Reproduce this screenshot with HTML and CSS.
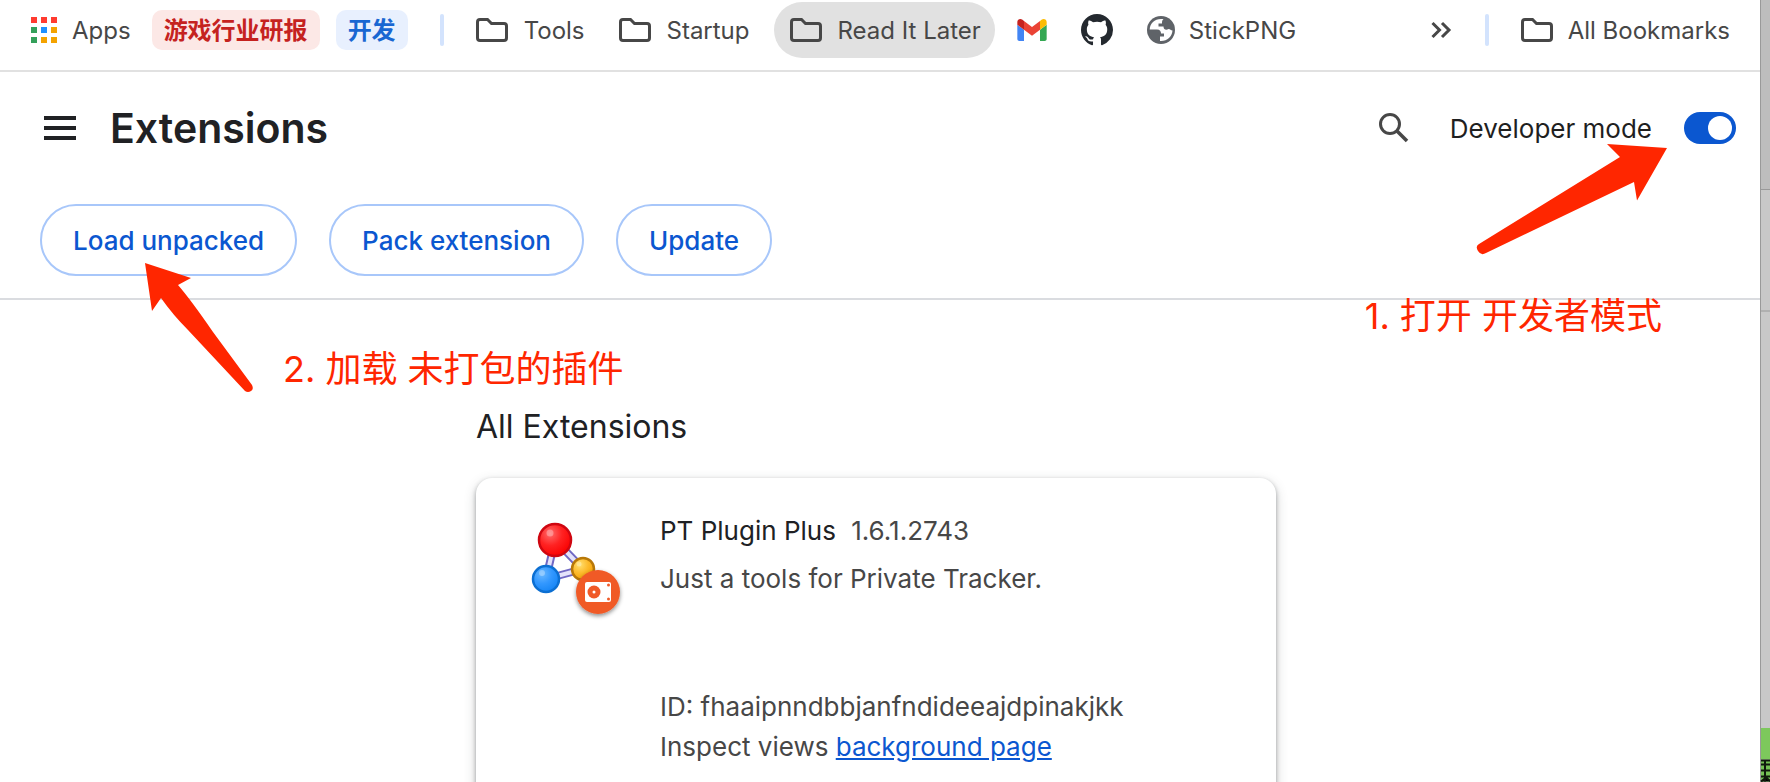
FILE: index.html
```html
<!DOCTYPE html>
<html lang="en">
<head>
<meta charset="utf-8">
<title>Extensions</title>
<link rel="stylesheet" href="styles.css">
</head>
<body>
<svg class="defs" aria-hidden="true">
  <symbol id="folder" viewBox="0 0 32 24"><path d="M4 1.5H11.5L15.5 5.500H28Q30.500 5.500 30.500 8V20Q30.500 22.500 28 22.500H4Q1.500 22.500 1.500 20V4Q1.500 1.500 4 1.500Z" fill="none" stroke="#474747" stroke-width="3"/></symbol>
</svg>
<div class="screen">
  <div class="window">
    <nav class="bookmarks" aria-label="Bookmarks">
      <a class="mark apps" href="#">
        <svg width="26" height="26" viewBox="0 0 26 26"><path fill="#ff3b30" d="M0 0h6v6H0zM10 0h6v6h-6zM20 0h6v6h-6z"/><path fill="#34a05a" d="M0 10h6v6H0zM0 20h6v6H0z"/><path fill="#1e90ff" d="M10 10h6v6h-6z"/><path fill="#f4a300" d="M20 10h6v6h-6zM10 20h6v6h-6zM20 20h6v6h-6z"/></svg>
        Apps</a>
      <button class="chip chip-red">游戏行业研报</button>
      <button class="chip chip-blue">开发</button>
      <span class="divider"></span>
      <button class="mark"><svg width="32" height="24"><use href="#folder"/></svg>Tools</button>
      <button class="mark"><svg width="32" height="24"><use href="#folder"/></svg>Startup</button>
      <button class="mark active"><svg width="32" height="24"><use href="#folder"/></svg>Read It Later</button>
      <a class="mark site" href="#" aria-label="Gmail"><svg width="30" height="22" viewBox="52 42 88 66"><path fill="#4285f4" d="M58 108h14V74L52 59v43c0 3.320 2.690 6 6 6"/><path fill="#34a853" d="M120 108h14c3.320 0 6-2.690 6-6V59l-20 15"/><path fill="#fbbc04" d="M120 48v26l20-15v-8c0-7.420-8.470-11.650-14.400-7.200"/><path fill="#ea4335" d="M72 74V48l24 18 24-18v26L96 92"/><path fill="#c5221f" d="M52 51v8l20 15V48l-5.600-4.200c-5.940-4.450-14.400-.22-14.400 7.200"/></svg></a>
      <a class="mark site" href="#" aria-label="GitHub"><svg width="32" height="32" viewBox="0 0 16 16"><path fill="#24292f" d="M8 0C3.580 0 0 3.580 0 8c0 3.540 2.290 6.530 5.470 7.590.4.070.55-.17.55-.38 0-.19-.01-.82-.01-1.490-2.010.37-2.530-.49-2.690-.94-.09-.23-.48-.94-.82-1.130-.28-.15-.68-.52-.01-.53.63-.01 1.080.58 1.230.82.72 1.210 1.870.87 2.330.66.070-.52.28-.87.51-1.070-1.780-.2-3.640-.89-3.640-3.950 0-.87.31-1.590.82-2.150-.08-.2-.36-1.020.08-2.120 0 0 .67-.21 2.200.82.64-.18 1.320-.27 2-.27s1.360.090 2 .27c1.530-1.040 2.200-.82 2.200-.82.44 1.100.16 1.920.08 2.120.51.56.82 1.270.82 2.150 0 3.070-1.870 3.750-3.650 3.950.29.25.54.73.54 1.480 0 1.070-.01 1.930-.01 2.200 0 .21.15.46.55.38A8.010 8.010 0 0 0 16 8c0-4.420-3.580-8-8-8z"/></svg></a>
      <a class="mark stick" href="#"><svg width="28" height="28" viewBox="0 0 28 28"><circle cx="14" cy="14" r="14" fill="#5f6368"/><path fill="#fff" d="M15 3C8 2.500 3 7 2.700 13.500H10c3 0 4 2 4 4h3v3h-4v4.500c7 .5 12-4 12.500-10.500-2 0-2-1.500-4-1.500-2 1.500-5 1-5-2.500h-5V7.500h3.500c0-2 0-3 1.500-4.500z"/></svg>StickPNG</a>
      <button class="more" aria-label="More bookmarks"><svg width="20" height="16" viewBox="0 0 20 16"><path d="M1.500 1l7 7-7 7M11 1l7 7-7 7" fill="none" stroke="#474747" stroke-width="3"/></svg></button>
      <span class="divider"></span>
      <button class="mark all"><svg width="32" height="24"><use href="#folder"/></svg>All Bookmarks</button>
    </nav>

    <header class="toolbar">
      <div class="titlebar">
        <button class="icon-button" aria-label="Menu"><svg width="32" height="24" viewBox="0 0 32 24"><path fill="#202124" d="M0 0h32v4H0zM0 10h32v4H0zM0 20h32v4H0z"/></svg></button>
        <h1>Extensions</h1>
        <button class="icon-button search" aria-label="Search"><svg width="30" height="30" viewBox="0 0 30 30"><circle cx="11" cy="11" r="9.500" fill="none" stroke="#474747" stroke-width="3"/><path d="M17.500 17.500L28 28" stroke="#474747" stroke-width="3.500"/></svg></button>
        <label class="dev" for="dev-mode">Developer mode</label>
        <input class="toggle" type="checkbox" role="switch" id="dev-mode" checked>
      </div>
      <div class="actions">
        <button>Load unpacked</button>
        <button>Pack extension</button>
        <button>Update</button>
      </div>
    </header>

    <main>
      <h2>All Extensions</h2>
      <article class="card">
        <div class="logo">
          <svg width="92" height="96" viewBox="0 0 92 96">
            <defs>
              <radialGradient id="r" cx=".35" cy=".3" r=".75"><stop offset="0" stop-color="#ff6a6a"/><stop offset=".5" stop-color="#ff2222"/><stop offset="1" stop-color="#fa0000"/></radialGradient>
              <radialGradient id="b" cx=".35" cy=".3" r=".75"><stop offset="0" stop-color="#6ab8ff"/><stop offset=".5" stop-color="#3398ff"/><stop offset="1" stop-color="#1484f5"/></radialGradient>
              <radialGradient id="y" cx=".35" cy=".3" r=".75"><stop offset="0" stop-color="#ffe070"/><stop offset=".5" stop-color="#fdbb2d"/><stop offset="1" stop-color="#f5a000"/></radialGradient>
              <filter id="s" x="-30%" y="-30%" width="160%" height="170%"><feDropShadow dx="0" dy="2" stdDeviation="2" flood-opacity=".45"/></filter>
            </defs>
            <g fill="none" stroke="#7068c4" stroke-width="8"><path d="M25 20L16 59M25 20L53 49M16 59L53 49"/></g>
            <g fill="none" stroke="#e4e2fa" stroke-width="4"><path d="M25 20L16 59M25 20L53 49M16 59L53 49"/></g>
            <circle cx="25" cy="20" r="16" fill="url(#r)" stroke="#cf0610" stroke-width="2.500"/>
            <circle cx="16" cy="59" r="13" fill="url(#b)" stroke="#0c6fd2" stroke-width="2.500"/>
            <circle cx="53" cy="49" r="11" fill="url(#y)" stroke="#b87808" stroke-width="2.500"/>
            <g fill="#fff" opacity=".3"><circle cx="20" cy="13" r="3.500"/><circle cx="12" cy="53" r="3"/><circle cx="49" cy="44" r="2.500"/></g>
            <circle cx="68" cy="72" r="22" fill="#f05a28" filter="url(#s)"/>
            <rect x="55" y="62" width="26" height="20" rx="2" fill="#fff"/>
            <circle cx="64" cy="72" r="6.500" fill="#f05a28"/><circle cx="64" cy="72" r="1.500" fill="#fff"/>
            <g fill="#f05a28"><circle cx="78.500" cy="65" r="1.500"/><circle cx="78.500" cy="79" r="1.500"/></g>
          </svg>
        </div>
        <div class="details">
          <h3>PT Plugin Plus <span class="version">1.6.1.2743</span></h3>
          <p class="summary">Just a tools for Private Tracker.</p>
          <p>ID: fhaaipnndbbjanfndideeajdpinakjkk</p>
          <p>Inspect views <a href="#">background page</a></p>
        </div>
      </article>
    </main>

    <div class="note note-open">
      <svg width="192" height="112" viewBox="0 0 192 112"><path fill="#ff2600" d="M191 4L161 56.500L158 38L10 109Q5 112 2 107T3 100L144 13L131 0Z"/></svg>
      <p>1. 打开 开发者模式</p>
    </div>
    <div class="note note-load">
      <svg width="110" height="130" viewBox="0 0 110 130"><path fill="#ff2600" d="M0 0L46 15L33 22Q46 37 68 69L107 122Q109 126 106 128T100 128L43 67Q28 52 16 35L7 48Z"/></svg>
      <p>2. 加载 未打包的插件</p>
    </div>
  </div>
  <aside class="desktop"><span class="grey"></span><span class="green"></span><svg class="code" viewBox="0 0 10 22"><path fill="#74c054" d="M0 0h10v22H0z"/><path stroke="#10180c" stroke-width="2" d="M0 1h10M0 5h10M0 11h10M0 17h10M4 0v22M0 22l5-4 5 4"/></svg></aside>
</div>
</body>
</html>
```
FILE: styles.css
```css
* { box-sizing: border-box; }

body {
  margin: 0;
  font-family: Inter, "Noto Sans CJK SC", sans-serif;
  font-size: 24px;
  color: #474747;
}

button {
  font: inherit;
  color: inherit;
  background: none;
  border: 0;
  padding: 0;
  cursor: pointer;
}

h1, h2, h3, p { margin: 0; font-weight: 400; }
svg { display: block; flex: none; overflow: visible; }
.defs { position: absolute; width: 0; height: 0; }

.screen { display: flex; height: 100vh; overflow: hidden; }
.window { position: relative; flex: 1; background: #fff; }

.bookmarks {
  display: flex;
  align-items: center;
  height: 72px;
  padding: 2px 30px 12px 31px;
  border-bottom: 2px solid #e1e1e1;
  white-space: nowrap;
}
.mark {
  display: flex;
  align-items: center;
  gap: 16px;
  height: 56px;
  margin-right: 2px;
  padding: 0 16px;
  border-radius: 28px;
  color: inherit;
  text-decoration: none;
}
.apps { gap: 15px; margin-right: 21px; padding: 0; }
.active { margin: 0 6px; padding-right: 14px; background: #e1e1e1; }
.stick { gap: 14px; }
.chip {
  height: 40px;
  padding: 0 12px 4px;
  margin-right: 16px;
  border-radius: 10px;
  font-weight: 700;
}
.chip-red { background: #fce8e6; color: #c5221f; }
.chip-blue { background: #e8f0fe; color: #1967d2; }
.divider { width: 4px; height: 32px; margin: 0 16px; border-radius: 2px; background: #d3e3fd; }
.more { margin-left: auto; padding: 0 18px; }
.all { gap: 15px; margin-right: 0; padding-right: 0; }

.toolbar { padding: 28px 24px 22px 40px; border-bottom: 2px solid #dadce0; }
.titlebar { display: flex; align-items: center; height: 56px; }
.icon-button { padding: 0 4px; }
h1 { margin-left: 30px; font-size: 41px; font-weight: 600; color: #202124; }
.search { margin-left: auto; }
.dev { margin: 0 32px 0 37px; font-size: 26px; color: #1f1f1f; }
.toggle {
  appearance: none;
  display: flex;
  justify-content: flex-end;
  align-items: center;
  width: 52px;
  height: 32px;
  margin: 0;
  padding: 4px;
  border-radius: 16px;
  background: #0b57d0;
}
.toggle::before { content: ""; width: 24px; height: 24px; border-radius: 50%; background: #fff; }

.actions { display: flex; gap: 32px; margin-top: 48px; }
.actions button {
  height: 72px;
  padding: 0 31px;
  border: 2px solid #a8c7fa;
  border-radius: 36px;
  font-size: 26px;
  font-weight: 500;
  color: #0b57d0;
}

main { width: 808px; margin: 0 auto; padding: 107px 8px 0 0; }
h2 { font-size: 32px; line-height: 40px; color: #202124; }
.card {
  display: flex;
  margin-top: 31px;
  padding: 33px 24px 96px 54px;
  border-radius: 16px;
  background: #fff;
  box-shadow: 0 2px 4px rgba(60, 64, 67, .4), 0 4px 12px rgba(60, 64, 67, .25);
}
.logo { width: 130px; padding-top: 9px; }
.details { font-size: 26px; line-height: 40px; }
h3 { font-size: 26px; color: #202124; }
.version { margin-left: 8px; color: #474747; }
.summary { margin: 8px 0 88px; }
.details a { color: #0b57d0; }

.note { position: absolute; color: #ff2600; font-size: 36px; line-height: 48px; font-weight: 300; white-space: nowrap; }
.note-open { top: 144px; right: 92px; }
.note-open svg { margin-left: auto; }
.note-open p { margin: 36px 6px 0 0; }
.note-load { top: 263px; left: 145px; display: flex; align-items: flex-end; gap: 28px; }

.desktop { display: flex; flex-direction: column; width: 10px; border-left: 1px solid #999; background: #c8c8c8; }
.grey { flex: 1; background: linear-gradient(#bdbdbd 0 189px, #999 189px 190px, #c8c8c8 190px 310px, #b0b0b0 310px 312px, #c8c8c8 312px); }
.green { height: 31px; background: #7dc85c; }
.code { width: 10px; height: 23px; }
```
